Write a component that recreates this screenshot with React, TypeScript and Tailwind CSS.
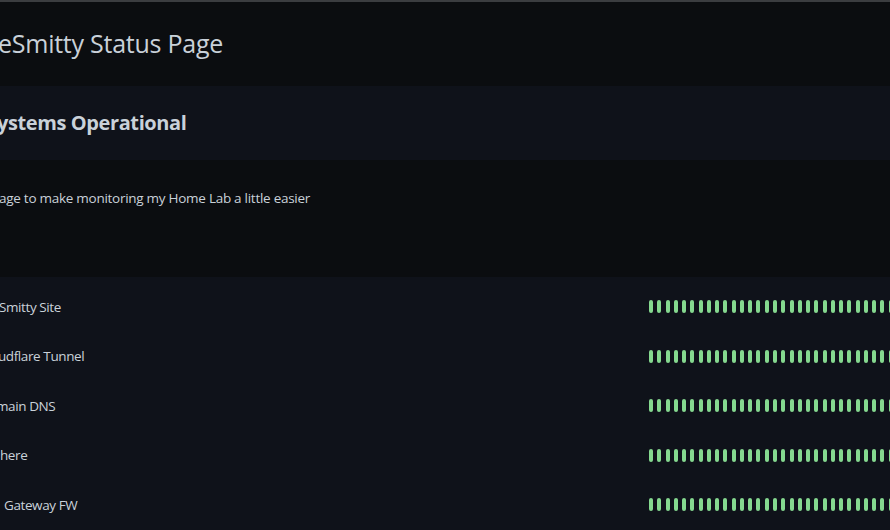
import React from "react";

interface Service {
  name: string;
  offset: string;
}

const services: Service[] = [
  { name: "Smitty Site", offset: "-ml-[1px]" },
  { name: "udflare Tunnel", offset: "-ml-[2px]" },
  { name: "main DNS", offset: "-ml-[4px]" },
  { name: "here", offset: "ml-0" },
  { name: "Gateway FW", offset: "ml-[4px]" },
];

const ticks = Array.from({ length: 60 }, (_, i) => i);

const UptimeBar = () => (
  <div className="flex gap-[4.27px] w-max">
    {ticks.map((t) => (
      <span key={t} className="block shrink-0 w-[4px] h-[13px] rounded-full bg-[#85d98f]" />
    ))}
  </div>
);

export default function App() {
  return (
    <div
      className="w-[890px] h-[530px] overflow-hidden bg-[#0b0d10] text-[#c9d1d9] flex flex-col"
      style={{ fontFamily: '"Open Sans", "Noto Sans", sans-serif' }}
    >
      <div className="h-[2px] bg-[#3b3d40] shrink-0" />

      <header className="h-[84px] flex items-center shrink-0">
        <h1 className="-ml-[2px] text-[25px] font-medium tracking-[-0.01em] whitespace-nowrap">
          eSmitty Status Page
        </h1>
      </header>

      <section className="h-[74px] bg-[#0f121a] flex items-center shrink-0">
        <h2 className="-ml-[3px] text-[20px] font-bold tracking-[-0.02em] whitespace-nowrap">
          ystems Operational
        </h2>
      </section>

      <section className="h-[117px] pt-[28px] shrink-0">
        <p className="-ml-[1px] text-[13.5px] tracking-[-0.02em] whitespace-nowrap">
          age to make monitoring my Home Lab a little easier
        </p>
      </section>

      <section className="flex-1 bg-[#0f121a] pt-[5px]">
        <ul>
          {services.map((s) => (
            <li key={s.name} className="h-[49.5px] flex items-center justify-between">
              <span className={`${s.offset} text-[13.5px] tracking-[-0.03em] whitespace-nowrap`}>
                {s.name}
              </span>
              <div className="w-[241px] shrink-0 overflow-hidden">
                <UptimeBar />
              </div>
            </li>
          ))}
        </ul>
      </section>
    </div>
  );
}
